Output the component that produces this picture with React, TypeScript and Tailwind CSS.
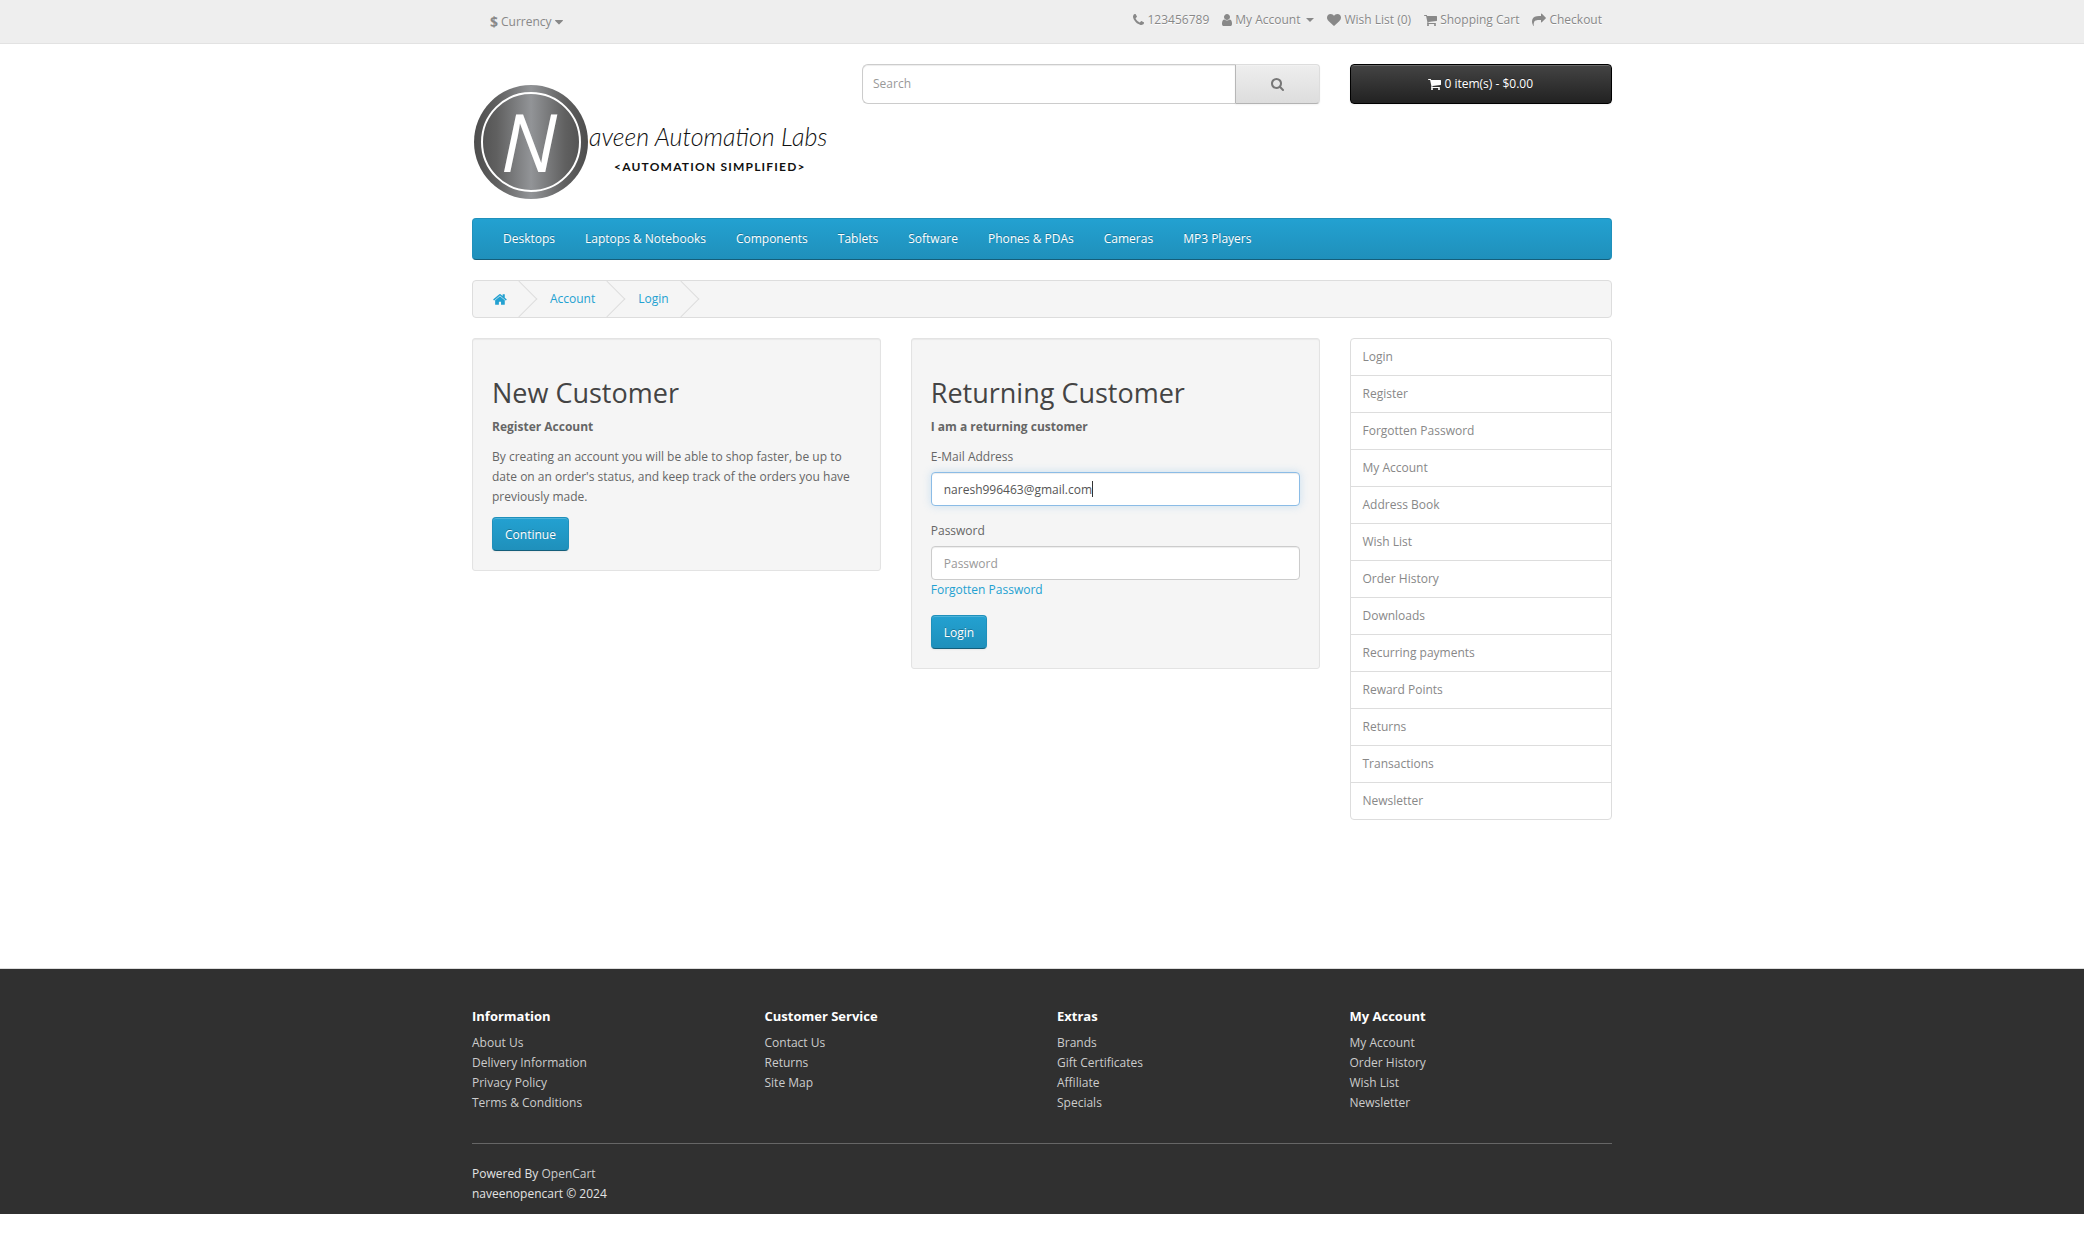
import { useEffect, useRef } from "react";
import type { ReactNode } from "react";

const ICONS = {
  phone: {
    box: "192 0 1408 1792",
    d: "M1600 1240q0 27-10 70.5t-21 68.5q-21 50-122 106-94 51-186 51-27 0-53-3.5t-57.5-12.5-47-14.5-55.5-20.5-49-18q-98-35-175-83-127-79-264-216t-216-264q-48-77-83-175-3-9-18-49t-20.5-55.5-14.5-47-12.5-57.5-3.5-53q0-92 51-186 56-101 106-122 25-11 68.5-21t70.5-10q14 0 21 3 18 6 53 76 11 19 30 54t35 63.5 31 53.5q3 4 17.5 25t21.5 35.5 7 28.5q0 20-28.5 50t-62 55-62 53-28.5 46q0 9 5 22.5t8.5 20.5 14 24 11.5 19q76 137 174 235t235 174q2 1 19 11.5t24 14 20.5 8.5 22.5 5q18 0 46-28.5t53-62 55-62 50-28.5q14 0 28.5 7t35.5 21.5 25 17.5q25 15 53.5 31t63.5 35 54 30q70 35 76 53 3 7 3 21z",
  },
  user: {
    box: "256 0 1280 1792",
    d: "M1536 1399q0 109-62.5 187t-150.5 78h-854q-88 0-150.5-78t-62.5-187q0-85 8.5-160.5t31.5-152 58.5-131 94-89 134.5-34.5q131 128 313 128t313-128q76 0 134.5 34.5t94 89 58.5 131 31.5 152 8.5 160.5zm-256-887q0 159-112.5 271.5t-271.5 112.5-271.5-112.5-112.5-271.5 112.5-271.5 271.5-112.5 271.5 112.5 112.5 271.5z",
  },
  heart: {
    box: "0 0 1792 1792",
    d: "M896 1664q-26 0-44-18l-624-602q-10-8-27.5-26t-55.5-65.5-68-97.5-53.5-121-23.5-138q0-220 127-344t351-124q62 0 126.5 21.5t120 58 95.5 68.5 76 68q36-36 76-68t95.5-68.5 120-58 126.5-21.5q224 0 351 124t127 344q0 221-229 450l-623 600q-18 18-44 18z",
  },
  cart: {
    box: "64 0 1664 1792",
    d: "M704 1536q0 52-38 90t-90 38-90-38-38-90 38-90 90-38 90 38 38 90zm896 0q0 52-38 90t-90 38-90-38-38-90 38-90 90-38 90 38 38 90zm128-1088v512q0 24-16.5 42.5t-40.5 21.5l-1044 122q13 60 13 70 0 16-24 64h920q26 0 45 19t19 45-19 45-45 19h-1024q-26 0-45-19t-19-45q0-11 8-31.5t16-36 21.5-40 15.5-29.5l-177-823h-204q-26 0-45-19t-19-45 19-45 45-19h256q16 0 28.5 6.5t19.5 15.5 13 24.5 8 26 5.5 29.5 4.5 26h1201q26 0 45 19t19 45z",
  },
  share: {
    box: "0 0 1792 1792",
    d: "M1792 640q0 26-19 45l-512 512q-19 19-45 19t-45-19-19-45v-256h-224q-98 0-175.5 6t-154 21.5-133 42.5-105.5 69.5-80 101-48.5 138.5-17.5 181q0 55 5 123 0 6 2.5 23.5t2.5 26.5q0 15-8.5 25t-23.5 10q-16 0-28-17-7-9-13-22t-13.5-30-10.5-24q-127-285-127-451 0-199 53-333 162-403 875-403h224v-256q0-26 19-45t45-19 45 19l512 512q19 19 19 45z",
  },
  search: {
    box: "64 128 1664 1664",
    d: "M1216 832q0-185-131.5-316.5t-316.5-131.5-316.5 131.5-131.5 316.5 131.5 316.5 316.5 131.5 316.5-131.5 131.5-316.5zm512 832q0 52-38 90t-90 38q-54 0-90-38l-343-342q-179 124-399 124-143 0-273.5-55.5t-225-150-150-225-55.5-273.5 55.5-273.5 150-225 225-150 273.5-55.5 273.5 55.5 225 150 150 225 55.5 273.5q0 220-124 399l343 343q37 37 37 90z",
  },
  home: {
    box: "64 0 1664 1792",
    d: "M1472 992v480q0 26-19 45t-45 19h-384v-384h-256v384h-384q-26 0-45-19t-19-45v-480q0-1 .5-3t.5-3l575-474 575 474q1 2 1 6zm223-69l-62 74q-8 9-21 11h-3q-13 0-21-7l-692-577-692 577q-12 8-24 7-13-2-21-11l-62-74q-8-10-7-23.5t11-21.5l719-599q32-26 76-26t76 26l244 204v-195q0-14 9-23t23-9h192q14 0 23 9t9 23v408l219 182q10 8 11 21.5t-7 23.5z",
  },
  caret: {
    box: "384 0 1024 1792",
    d: "M1408 704q0 26-19 45l-448 448q-19 19-45 19t-45-19l-448-448q-19-19-19-45t19-45 45-19h896q26 0 45 19t19 45z",
  },
};

function Icon({ name, className = "h-[14px]" }: { name: keyof typeof ICONS; className?: string }) {
  return (
    <svg viewBox={ICONS[name].box} className={`w-auto shrink-0 fill-current ${className}`} aria-hidden="true">
      <path d={ICONS[name].d} />
    </svg>
  );
}

function Logo() {
  return (
    <svg viewBox="0 0 360 144" className="block w-full max-w-[360px]" role="img" aria-label="naveenopencart">
      <defs>
        <linearGradient id="disc" x1="0" x2="1" y1="0" y2="0">
          <stop offset="0" stopColor="#4d4d4d" />
          <stop offset="0.2" stopColor="#606060" />
          <stop offset="0.5" stopColor="#929497" />
          <stop offset="0.8" stopColor="#606060" />
          <stop offset="1" stopColor="#4d4d4d" />
        </linearGradient>
      </defs>
      <circle cx="59" cy="78" r="57" fill="url(#disc)" />
      <circle cx="59" cy="78" r="49" fill="none" stroke="#fff" strokeWidth="2" />
      <text x="57" y="108" textAnchor="middle" fill="#fff" className="font-['Liberation_Sans_Narrow','Open_Sans',sans-serif] text-[80px] italic">
        N
      </text>
      <text x="117" y="82" fill="#111" className="font-['Lato',sans-serif] text-[25px] font-light italic">
        aveen Automation Labs
      </text>
      <text x="142" y="107" fill="#111" className="font-['Lato',sans-serif] text-[12px] font-bold tracking-widest">
        &lt;AUTOMATION SIMPLIFIED&gt;
      </text>
    </svg>
  );
}

const TOP_LINKS: { icon: keyof typeof ICONS; label: string; menu?: boolean }[] = [
  { icon: "phone", label: "123456789" },
  { icon: "user", label: "My Account", menu: true },
  { icon: "heart", label: "Wish List (0)" },
  { icon: "cart", label: "Shopping Cart" },
  { icon: "share", label: "Checkout" },
];

const CATEGORIES = [
  "Desktops",
  "Laptops & Notebooks",
  "Components",
  "Tablets",
  "Software",
  "Phones & PDAs",
  "Cameras",
  "MP3 Players",
];

const SIDE_LINKS = [
  "Login",
  "Register",
  "Forgotten Password",
  "My Account",
  "Address Book",
  "Wish List",
  "Order History",
  "Downloads",
  "Recurring payments",
  "Reward Points",
  "Returns",
  "Transactions",
  "Newsletter",
];

const FOOTER = [
  { title: "Information", links: ["About Us", "Delivery Information", "Privacy Policy", "Terms & Conditions"] },
  { title: "Customer Service", links: ["Contact Us", "Returns", "Site Map"] },
  { title: "Extras", links: ["Brands", "Gift Certificates", "Affiliate", "Specials"] },
  { title: "My Account", links: ["My Account", "Order History", "Wish List", "Newsletter"] },
];

const CONTAINER = "mx-auto w-full max-w-[1170px] px-[15px]";

const PRIMARY =
  "inline-block rounded border border-[#1f90bb] border-b-[#145e7a] bg-linear-to-b from-[#23a1d1] to-[#1f90bb] px-3 pt-[7px] pb-[5px] text-white shadow-[inset_0_1px_0_rgba(255,255,255,0.2),0_1px_2px_rgba(0,0,0,0.05)] [text-shadow:0_-1px_0_rgba(0,0,0,0.25)]";

const FIELD =
  "block h-[34px] w-full rounded border bg-white px-3 text-[#555] outline-none placeholder:text-[#999]";

function Well({ children }: { children: ReactNode }) {
  return (
    <section className="rounded-[3px] border border-[#e3e3e3] bg-[#f5f5f5] p-[19px] shadow-[inset_0_1px_1px_rgba(0,0,0,0.05)]">
      {children}
    </section>
  );
}

function Crumb({ children, label }: { children: ReactNode; label?: string }) {
  return (
    <li className="relative px-5 after:pointer-events-none after:absolute after:-top-[3px] after:-right-[5px] after:size-[26px] after:-rotate-45 after:border-r after:border-b after:border-[#ddd]">
      <a href="#" aria-label={label} className="flex h-5 items-center">
        {children}
      </a>
    </li>
  );
}

export default function App() {
  const email = useRef<HTMLInputElement>(null);

  useEffect(() => {
    const field = email.current;
    if (field) {
      field.focus();
      field.setSelectionRange(field.value.length, field.value.length);
    }
  }, []);

  return (
    <div className="bg-white font-['Open_Sans',sans-serif] text-[12px] leading-5 text-[#666]">
      <nav className="border-b border-[#e2e2e2] bg-[#eee] text-[#888] [text-shadow:0_1px_0_#fff]">
        <div className={`${CONTAINER} flex flex-wrap items-start justify-between pt-[10px] pb-[11px]`}>
          <button type="button" className="mt-[2px] ml-[18px] flex items-center gap-[3px]">
            <strong className="text-[14px] leading-5">$</strong>
            <span>Currency</span>
            <Icon name="caret" />
          </button>
          <ul className="mr-[10px] flex flex-wrap gap-[13px]">
            {TOP_LINKS.map((link) => (
              <li key={link.label}>
                <a href="#" className="flex items-center gap-[3px]">
                  <Icon name={link.icon} />
                  <span>{link.label}</span>
                  {link.menu && (
                    <span className="ml-[3px] border-x-4 border-t-4 border-x-transparent border-t-current" />
                  )}
                </a>
              </li>
            ))}
          </ul>
        </div>
      </nav>

      <header className={`${CONTAINER} mt-5 grid grid-cols-1 gap-x-[30px] gap-y-4 sm:grid-cols-12`}>
        <div className="pb-[10px] sm:col-span-4">
          <a href="#" className="block">
            <Logo />
          </a>
        </div>
        <form className="flex h-10 sm:col-span-5" onSubmit={(e) => e.preventDefault()}>
          <input
            type="text"
            aria-label="Search"
            placeholder="Search"
            className="min-w-0 flex-1 rounded-l-md border border-r-0 border-[#ccc] bg-white px-[10px] shadow-[inset_0_1px_1px_rgba(0,0,0,0.075)] outline-none placeholder:text-[#999]"
          />
          <button
            type="submit"
            aria-label="Submit search"
            className="flex items-center rounded-r border border-[#ddd] border-b-[#b3b3b3] border-l-[#b7b7b7] bg-linear-to-b from-[#eee] to-[#ddd] px-[35px] text-[#777] shadow-[inset_0_1px_0_rgba(255,255,255,0.2),0_1px_2px_rgba(0,0,0,0.05)]"
          >
            <Icon name="search" className="h-[13px]" />
          </button>
        </form>
        <div className="sm:col-span-3">
          <button
            type="button"
            className="flex h-10 w-full items-center justify-center gap-[3px] rounded border border-black bg-linear-to-b from-[#444] to-[#222] text-white shadow-[inset_0_1px_0_rgba(255,255,255,0.2),0_1px_2px_rgba(0,0,0,0.05)] [text-shadow:0_-1px_0_rgba(0,0,0,0.25)]"
          >
            <Icon name="cart" />
            <span>0 item(s) - $0.00</span>
          </button>
        </div>
      </header>

      <div className={CONTAINER}>
        <nav className="mb-5 rounded border border-[#1f90bb] border-b-[#145e7a] bg-linear-to-b from-[#23a1d1] to-[#1f90bb] px-[15px]">
          <ul className="flex flex-wrap">
            {CATEGORIES.map((category) => (
              <li key={category}>
                <a href="#" className="block px-[15px] py-[10px] text-white [text-shadow:0_-1px_0_rgba(0,0,0,0.25)]">
                  {category}
                </a>
              </li>
            ))}
          </ul>
        </nav>

        <ul className="mb-5 flex gap-[3px] overflow-hidden rounded border border-[#ddd] bg-[#f5f5f5] py-2 text-[#23a1d1]">
          <Crumb label="Home">
            <Icon name="home" className="h-[15px]" />
          </Crumb>
          <Crumb>Account</Crumb>
          <Crumb>Login</Crumb>
        </ul>

        <div className="grid grid-cols-1 items-start gap-[30px] sm:grid-cols-12">
          <main className="grid grid-cols-1 items-start gap-[30px] sm:col-span-9 md:grid-cols-2">
            <Well>
              <h2 className="mt-5 mb-[10px] text-[27px] leading-[29px] font-normal text-[#444]">New Customer</h2>
              <p className="mb-[10px] font-bold">Register Account</p>
              <p className="mb-[10px]">
                By creating an account you will be able to shop faster, be up to date on an order's status, and keep
                track of the orders you have previously made.
              </p>
              <a href="#" className={PRIMARY}>
                Continue
              </a>
            </Well>
            <Well>
              <h2 className="mt-5 mb-[10px] text-[27px] leading-[29px] font-normal text-[#444]">Returning Customer</h2>
              <p className="mb-[10px] font-bold">I am a returning customer</p>
              <form onSubmit={(e) => e.preventDefault()}>
                <div className="mb-[15px]">
                  <label htmlFor="email" className="mb-[5px] block">
                    E-Mail Address
                  </label>
                  <div className="relative">
                    <input
                      ref={email}
                      id="email"
                      type="text"
                      placeholder="E-Mail Address"
                      defaultValue="naresh996463@gmail.com"
                      className={`${FIELD} border-[#8bbce6] caret-transparent shadow-[inset_0_1px_1px_rgba(0,0,0,0.075),0_0_8px_rgba(102,175,233,0.3)]`}
                    />
                    <span
                      aria-hidden="true"
                      className="pointer-events-none absolute top-[9px] left-[161px] h-4 w-px bg-[#333]"
                    />
                  </div>
                </div>
                <div className="mb-[15px]">
                  <label htmlFor="password" className="mb-[5px] block">
                    Password
                  </label>
                  <input
                    id="password"
                    type="password"
                    placeholder="Password"
                    className={`${FIELD} border-[#ccc] shadow-[inset_0_1px_1px_rgba(0,0,0,0.075)]`}
                  />
                  <a href="#" className="block w-fit text-[#23a1d1]">
                    Forgotten Password
                  </a>
                </div>
                <button type="submit" className={`${PRIMARY} block`}>
                  Login
                </button>
              </form>
            </Well>
          </main>

          <aside className="sm:col-span-3">
            <ul className="divide-y divide-[#ddd] rounded border border-[#ddd]">
              {SIDE_LINKS.map((link) => (
                <li key={link}>
                  <a href="#" className="block px-3 py-2 text-[#888]">
                    {link}
                  </a>
                </li>
              ))}
            </ul>
          </aside>
        </div>
      </div>

      <footer className="mt-[148px] border-t border-[#ddd] bg-[#303030] pt-[30px] pb-[10px] text-[#e2e2e2]">
        <div className={CONTAINER}>
          <div className="grid grid-cols-2 gap-x-[30px] sm:grid-cols-4">
            {FOOTER.map((column) => (
              <section key={column.title} className="pb-[10px]">
                <h5 className="my-[10px] text-[13px] leading-[14px] font-bold text-white">{column.title}</h5>
                <ul className="text-[#ccc]">
                  {column.links.map((link) => (
                    <li key={link}>
                      <a href="#">{link}</a>
                    </li>
                  ))}
                </ul>
              </section>
            ))}
          </div>
          <hr className="my-5 border-t border-[#666]" />
          <p>
            Powered By{" "}
            <a href="#" className="text-[#ccc]">
              OpenCart
            </a>
            <br />
            naveenopencart © 2024
          </p>
        </div>
      </footer>
    </div>
  );
}
